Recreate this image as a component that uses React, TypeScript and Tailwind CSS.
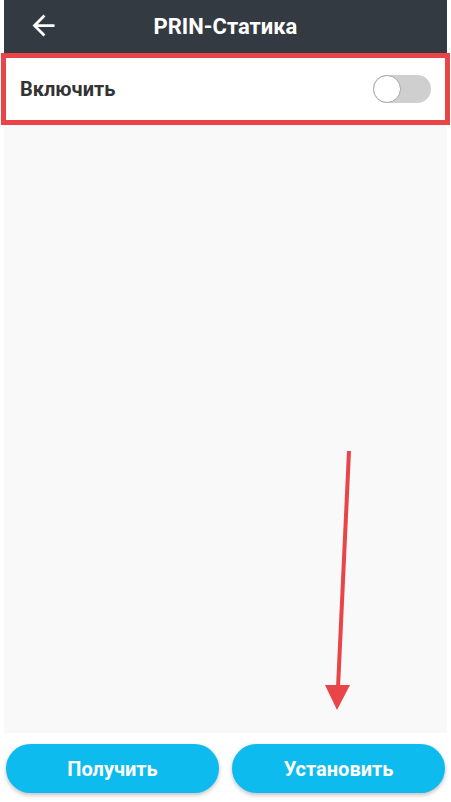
export default function App() {
  return (
    <div className="relative w-[451px] h-[802px] bg-white flex flex-col px-[4px] font-['Roboto',sans-serif] overflow-hidden">
      {/* Toolbar */}
      <div className="h-[53px] shrink-0 bg-[#343a42] flex items-center relative">
        <svg className="absolute left-[23px] top-[9px]" width="33" height="33" viewBox="0 0 24 24" fill="white">
          <path d="M20 11H7.83l5.59-5.59L12 4l-8 8 8 8 1.41-1.41L7.83 13H20v-2z" />
        </svg>
        <h1 className="w-full text-center text-white text-[22px] font-bold">PRIN-Статика</h1>
      </div>

      {/* Highlighted switch row */}
      <div className="-mx-[3px] h-[72px] shrink-0 border-[5px] border-[#e94448] bg-white flex items-center justify-between pl-[14px] pr-[14px]">
        <span className="text-[20px] font-bold text-[#333333]">Включить</span>
        <div className="w-[58px] h-[28px] rounded-full bg-[#cfcfcf] relative">
          <div className="absolute left-0 top-0 w-[28px] h-[28px] rounded-full bg-white border border-[#a8a8a8]" />
        </div>
      </div>

      {/* Empty body */}
      <div className="flex-1 bg-[#f9f9f9]" />

      {/* Buttons */}
      <div className="h-[69px] shrink-0 flex items-start gap-[13px] pt-[11px] px-[2px]">
        <button className="flex-1 h-[49px] rounded-full bg-[#0dbbee] text-white text-[20px] font-bold shadow-[0_2px_4px_rgba(0,0,0,0.25)]">
          Получить
        </button>
        <button className="flex-1 h-[49px] rounded-full bg-[#0dbbee] text-white text-[20px] font-bold shadow-[0_2px_4px_rgba(0,0,0,0.25)]">
          Установить
        </button>
      </div>

      {/* Annotation arrow */}
      <svg className="absolute left-0 top-0 pointer-events-none" width="451" height="802">
        <line x1="349" y1="451" x2="338" y2="688" stroke="#e94448" strokeWidth="4" />
        <polygon points="325,685 350,685 337,710" fill="#e94448" />
      </svg>
    </div>
  );
}
